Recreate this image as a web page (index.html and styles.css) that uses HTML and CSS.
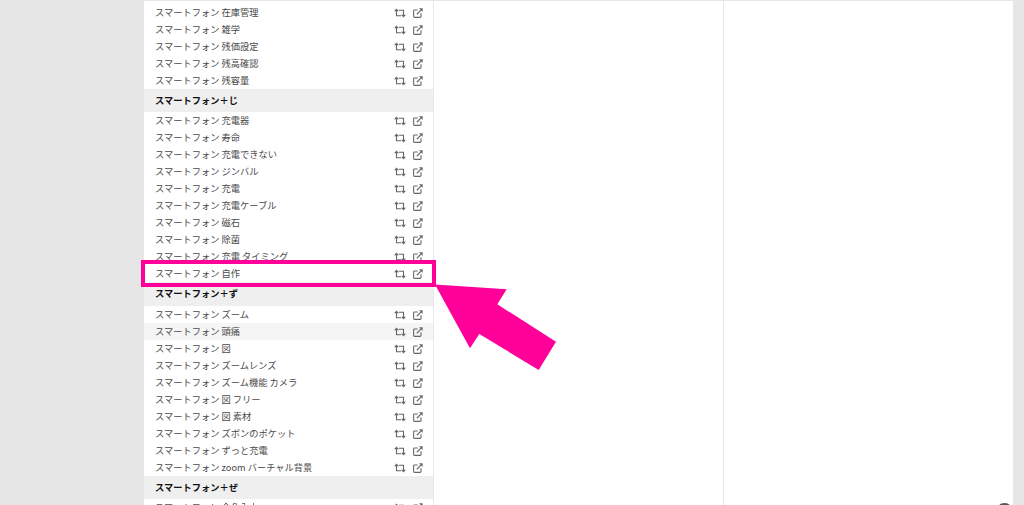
FILE: index.html
```html
<!DOCTYPE html>
<html lang="ja">
<head>
<meta charset="utf-8">
<title>スマートフォン</title>
<link rel="stylesheet" href="styles.css">
</head>
<body>
<svg class="defs" width="0" height="0" aria-hidden="true">
  <symbol id="swap" viewBox="0 0 12 10">
    <path d="M2.5 2.5v5.2H7M9.5 7.5V2.3H5" fill="none" stroke="currentColor" stroke-width="1.1"/>
    <path d="M0 3.2 2.5.4 5 3.2zM7 6.8 9.5 9.6 12 6.8z" fill="currentColor"/>
  </symbol>
  <symbol id="open" viewBox="0 0 11 11">
    <path d="M5.2 2.2H1.6a.9.9 0 0 0-.9.9v6.3a.9.9 0 0 0 .9.9h6.3a.9.9 0 0 0 .9-.9V5.8" fill="none" stroke="currentColor" stroke-width="1.2"/>
    <path d="M4.2 6.9 9 2.1" fill="none" stroke="currentColor" stroke-width="1.3"/>
    <path d="M6.6.4h4v4z" fill="currentColor"/>
  </symbol>
</svg>
<div class="page">
  <main class="columns">
    <section class="col list">
      <div class="row"><span>スマートフォン 在庫管理</span><span class="acts"><svg class="i-swap"><use href="#swap"/></svg><svg class="i-open"><use href="#open"/></svg></span></div>
      <div class="row"><span>スマートフォン 雑学</span><span class="acts"><svg class="i-swap"><use href="#swap"/></svg><svg class="i-open"><use href="#open"/></svg></span></div>
      <div class="row"><span>スマートフォン 残価設定</span><span class="acts"><svg class="i-swap"><use href="#swap"/></svg><svg class="i-open"><use href="#open"/></svg></span></div>
      <div class="row"><span>スマートフォン 残高確認</span><span class="acts"><svg class="i-swap"><use href="#swap"/></svg><svg class="i-open"><use href="#open"/></svg></span></div>
      <div class="row"><span>スマートフォン 残容量</span><span class="acts"><svg class="i-swap"><use href="#swap"/></svg><svg class="i-open"><use href="#open"/></svg></span></div>
      <h2 class="head">スマートフォン＋じ</h2>
      <div class="row"><span>スマートフォン 充電器</span><span class="acts"><svg class="i-swap"><use href="#swap"/></svg><svg class="i-open"><use href="#open"/></svg></span></div>
      <div class="row"><span>スマートフォン 寿命</span><span class="acts"><svg class="i-swap"><use href="#swap"/></svg><svg class="i-open"><use href="#open"/></svg></span></div>
      <div class="row"><span>スマートフォン 充電できない</span><span class="acts"><svg class="i-swap"><use href="#swap"/></svg><svg class="i-open"><use href="#open"/></svg></span></div>
      <div class="row"><span>スマートフォン ジンバル</span><span class="acts"><svg class="i-swap"><use href="#swap"/></svg><svg class="i-open"><use href="#open"/></svg></span></div>
      <div class="row"><span>スマートフォン 充電</span><span class="acts"><svg class="i-swap"><use href="#swap"/></svg><svg class="i-open"><use href="#open"/></svg></span></div>
      <div class="row"><span>スマートフォン 充電ケーブル</span><span class="acts"><svg class="i-swap"><use href="#swap"/></svg><svg class="i-open"><use href="#open"/></svg></span></div>
      <div class="row"><span>スマートフォン 磁石</span><span class="acts"><svg class="i-swap"><use href="#swap"/></svg><svg class="i-open"><use href="#open"/></svg></span></div>
      <div class="row"><span>スマートフォン 除菌</span><span class="acts"><svg class="i-swap"><use href="#swap"/></svg><svg class="i-open"><use href="#open"/></svg></span></div>
      <div class="row"><span>スマートフォン 充電 タイミング</span><span class="acts"><svg class="i-swap"><use href="#swap"/></svg><svg class="i-open"><use href="#open"/></svg></span></div>
      <div class="row marked"><span>スマートフォン 自作</span><span class="acts"><svg class="i-swap"><use href="#swap"/></svg><svg class="i-open"><use href="#open"/></svg></span></div>
      <h2 class="head head-tall">スマートフォン＋ず</h2>
      <div class="row"><span>スマートフォン ズーム</span><span class="acts"><svg class="i-swap"><use href="#swap"/></svg><svg class="i-open"><use href="#open"/></svg></span></div>
      <div class="row hovered"><span>スマートフォン 頭痛</span><span class="acts"><svg class="i-swap"><use href="#swap"/></svg><svg class="i-open"><use href="#open"/></svg></span></div>
      <div class="row"><span>スマートフォン 図</span><span class="acts"><svg class="i-swap"><use href="#swap"/></svg><svg class="i-open"><use href="#open"/></svg></span></div>
      <div class="row"><span>スマートフォン ズームレンズ</span><span class="acts"><svg class="i-swap"><use href="#swap"/></svg><svg class="i-open"><use href="#open"/></svg></span></div>
      <div class="row"><span>スマートフォン ズーム機能 カメラ</span><span class="acts"><svg class="i-swap"><use href="#swap"/></svg><svg class="i-open"><use href="#open"/></svg></span></div>
      <div class="row"><span>スマートフォン 図 フリー</span><span class="acts"><svg class="i-swap"><use href="#swap"/></svg><svg class="i-open"><use href="#open"/></svg></span></div>
      <div class="row"><span>スマートフォン 図 素材</span><span class="acts"><svg class="i-swap"><use href="#swap"/></svg><svg class="i-open"><use href="#open"/></svg></span></div>
      <div class="row"><span>スマートフォン ズボンのポケット</span><span class="acts"><svg class="i-swap"><use href="#swap"/></svg><svg class="i-open"><use href="#open"/></svg></span></div>
      <div class="row"><span>スマートフォン ずっと充電</span><span class="acts"><svg class="i-swap"><use href="#swap"/></svg><svg class="i-open"><use href="#open"/></svg></span></div>
      <div class="row"><span>スマートフォン zoom バーチャル背景</span><span class="acts"><svg class="i-swap"><use href="#swap"/></svg><svg class="i-open"><use href="#open"/></svg></span></div>
      <h2 class="head">スマートフォン＋ぜ</h2>
      <div class="row"><span>スマートフォン 全角入力</span><span class="acts"><svg class="i-swap"><use href="#swap"/></svg><svg class="i-open"><use href="#open"/></svg></span></div>
    </section>
    <section class="col"></section>
    <section class="col"></section>
  </main>
</div>
<svg class="arrow" viewBox="0 0 1024 505" aria-hidden="true">
  <polygon points="435,284.5 506.7,289.3 497.3,304.3 556,341.7 538.7,370 479.3,334 470,348.3"/>
</svg>
<div class="fab"></div>
</body>
</html>
```
FILE: styles.css
```css
* { box-sizing: border-box; }
html, body { margin: 0; height: 100%; overflow: hidden; }
body { background: #e6e6e6; font-family: "Noto Sans CJK JP", "Noto Sans", sans-serif; position: relative; }
.defs { position: absolute; }
.page { padding: 1px 11px 0 144px; height: 100%; filter: blur(0.3px); }
.columns { display: flex; background: #fff; height: 100%; }
.col { width: 290px; border-right: 1px solid #e8e8e8; padding-top: 3px; }
.col:last-child { flex: 1; border-right: 0; }
.list { color: #4a4a4a; }
.row { height: 17px; display: flex; align-items: center; justify-content: space-between; padding: 0 10px 0 11px; font-size: 9.25px; line-height: 17px; position: relative; }
.hovered { background: #f5f5f5; }
.head { height: 23px; margin: 0; padding: 0 11px; background: #efefef; color: #111; font-size: 9.25px; font-weight: 700; line-height: 23px; }
.head-tall { height: 24px; }
.acts { display: flex; align-items: center; gap: 7px; color: #66666c; }
.i-swap { width: 12px; height: 10px; display: block; }
.i-open { width: 10px; height: 10px; display: block; }
.marked::after { content: ""; position: absolute; left: -3px; right: -3px; top: -5px; bottom: -5px; border: 4px solid #ff0099; }
.arrow { position: absolute; left: 0; top: 0; width: 1024px; height: 505px; fill: #ff0099; pointer-events: none; }
.fab { position: absolute; left: 996px; top: 503px; width: 17px; height: 17px; border-radius: 50%; background: #555; }
```
